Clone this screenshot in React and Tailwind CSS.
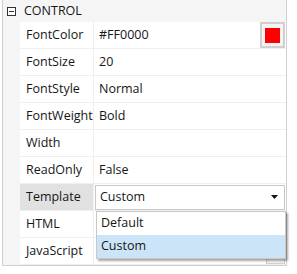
import React from 'react';

const rows = [
  { name: 'FontColor', value: '#FF0000', swatch: true },
  { name: 'FontSize', value: '20' },
  { name: 'FontStyle', value: 'Normal' },
  { name: 'FontWeight', value: 'Bold' },
  { name: 'Width', value: '' },
  { name: 'ReadOnly', value: 'False' },
  { name: 'Template', value: 'Custom', select: true },
  { name: 'HTML', value: '' },
  { name: 'JavaScript', value: '', button: true },
];

function Row({ row }) {
  return (
    <div className="flex h-[27px]">
      <div className="w-[17px] shrink-0 bg-[#f5f5f5]" />
      <div
        className={`w-[74px] shrink-0 flex items-center pl-[6px] border-r border-b border-[#efefef] ${
          row.select ? 'bg-[#e1e1e1]' : 'bg-white'
        }`}
      >
        {row.name}
      </div>
      <div className="flex-1 flex items-center border-b border-[#efefef] bg-white relative">
        {row.select ? (
          <div className="mx-[1px] h-[25px] flex-1 flex items-center justify-between border border-[#c8c8c8] pl-[4px] pr-[6px] bg-white">
            <span>{row.value}</span>
            <svg width="7" height="4" viewBox="0 0 7 4">
              <path d="M0 0h7L3.5 4z" fill="#111" />
            </svg>
          </div>
        ) : (
          <span className="pl-[5px] flex-1">{row.value}</span>
        )}
        {row.swatch && (
          <div className="w-[25px] h-[26px] mr-[1px] border-2 border-[#d0d0d0] bg-[#f4f4f4] flex items-center justify-center">
            <div className="w-[15px] h-[15px] bg-[#ff0000]" />
          </div>
        )}
        {row.button && (
          <div className="w-[19px] h-[25px] mr-[1px] border border-[#d0d0d0] bg-[#f4f4f4]" />
        )}
      </div>
    </div>
  );
}

export default function App() {
  return (
    <div
      className="w-[297px] h-[274px] bg-white relative text-[12.5px] text-[#161616]"
      style={{ fontFamily: '"Open Sans", "Noto Sans", Arial, sans-serif' }}
    >
      <div className="ml-[2px] w-[285px] border-l border-r border-b border-[#cfcfcf]">
        <div className="h-[22px] bg-[#f5f5f5] flex items-center">
          <svg width="9" height="9" viewBox="0 0 9 9" className="ml-[4px] mr-[8px]">
            <rect x="0.5" y="0.5" width="8" height="8" fill="white" stroke="#333" />
            <path d="M2 4.5h5" stroke="#333" />
          </svg>
          <span>CONTROL</span>
        </div>
        {rows.map((r) => (
          <Row key={r.name} row={r} />
        ))}
      </div>

      <div className="absolute left-[96px] top-[211px] w-[190px] bg-white border border-[#c8c8c8] shadow-[2px_2px_2px_rgba(0,0,0,0.35)]">
        <div className="h-[23px] flex items-center pl-[4px]">Default</div>
        <div className="h-[23px] flex items-center pl-[4px] bg-[#cce4f7]">Custom</div>
      </div>
    </div>
  );
}
